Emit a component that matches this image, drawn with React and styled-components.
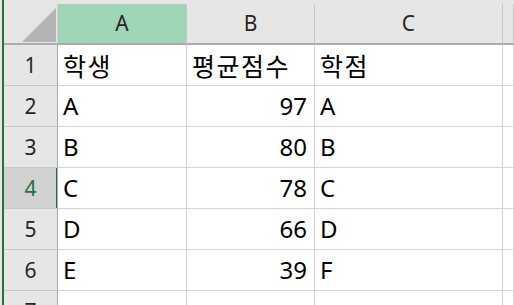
import React from "react";
import styled, { createGlobalStyle } from "styled-components";

const Global = createGlobalStyle`
  html, body { margin: 0; padding: 0; background: #e6e6e6; overflow: hidden; }
  body { font-family: "Noto Sans", "Noto Sans CJK KR", sans-serif; }
`;

const Frame = styled.div`
  width: 514px;
  height: 305px;
  box-sizing: border-box;
  padding-left: 2px;
  background: #e6e6e6;
  overflow: hidden;
`;

const Sheet = styled.div`
  height: 100%;
  box-sizing: border-box;
  border-left: 2px solid #217346;
  padding-top: 4px;
  display: grid;
  grid-template-columns: 54px 129px 128px 188px 1fr;
  grid-template-rows: 41px repeat(7, 41px);
  background: #e6e6e6;
`;

const Corner = styled.div`
  position: relative;
  box-sizing: border-box;
  border-right: 1px solid #d0d0d0;
  border-bottom: 2px solid #ababab;
  background: #e6e6e6;
`;

const Triangle = styled.svg`
  position: absolute;
  left: 18px;
  top: 4px;
`;

const ColHead = styled.div`
  box-sizing: border-box;
  display: flex;
  align-items: center;
  justify-content: center;
  padding-bottom: 2px;
  font-size: 21px;
  color: #262626;
  background: ${(p) => (p.$active ? "#9fd5b7" : "#e6e6e6")};
  border-right: 1px solid #c6c6c6;
  border-bottom: 2px solid #ababab;
`;

const RowHead = styled.div`
  box-sizing: border-box;
  display: flex;
  align-items: center;
  justify-content: center;
  font-size: 21px;
  color: ${(p) => (p.$active ? "#217346" : "#262626")};
  background: ${(p) => (p.$active ? "#d2d2d2" : "#e6e6e6")};
  border-right: 1px solid #ababab;
  border-bottom: 1px solid #c8c8c8;
  box-shadow: ${(p) => (p.$active ? "inset -1px 0 0 #217346, 1px 0 0 #217346" : "none")};
`;

const Cell = styled.div`
  box-sizing: border-box;
  display: flex;
  align-items: center;
  justify-content: ${(p) => (p.$num ? "flex-end" : "flex-start")};
  padding: 0 ${(p) => (p.$num ? "7px" : "0")} 0 ${(p) => (p.$num ? "0" : "5px")};
  font-size: 24px;
  line-height: 40px;
  color: #000;
  background: #fff;
  border-right: 1px solid #d4d4d4;
  border-bottom: 1px solid #d4d4d4;
  white-space: nowrap;
  overflow: hidden;
`;

const Hangul = styled.span`
  font-family: "Noto Sans CJK KR", sans-serif;
  font-size: 25px;
  letter-spacing: 1.5px;
`;

const cols = ["A", "B", "C", ""];
const rows = [
  [{ t: "학생", k: true }, { t: "평균점수", k: true }, { t: "학점", k: true }],
  [{ t: "A" }, { t: "97", n: true }, { t: "A" }],
  [{ t: "B" }, { t: "80", n: true }, { t: "B" }],
  [{ t: "C" }, { t: "78", n: true }, { t: "C" }],
  [{ t: "D" }, { t: "66", n: true }, { t: "D" }],
  [{ t: "E" }, { t: "39", n: true }, { t: "F" }],
  [{ t: "" }, { t: "" }, { t: "" }],
];

export default function App() {
  return (
    <>
      <Global />
      <Frame>
        <Sheet>
          <Corner>
            <Triangle width="34" height="34" viewBox="0 0 34 34">
              <polygon points="34,0 34,34 0,34" fill="#b4b4b4" />
            </Triangle>
          </Corner>
          {cols.map((c, i) => (
            <ColHead key={i} $active={c === "A"}>
              {c}
            </ColHead>
          ))}
          {rows.map((r, ri) => (
            <React.Fragment key={ri}>
              <RowHead $active={ri === 3}>{ri + 1}</RowHead>
              {r.map((cell, ci) => (
                <Cell key={ci} $num={cell.n}>
                  {cell.k ? <Hangul>{cell.t}</Hangul> : cell.t}
                </Cell>
              ))}
              <Cell />
            </React.Fragment>
          ))}
        </Sheet>
      </Frame>
    </>
  );
}
